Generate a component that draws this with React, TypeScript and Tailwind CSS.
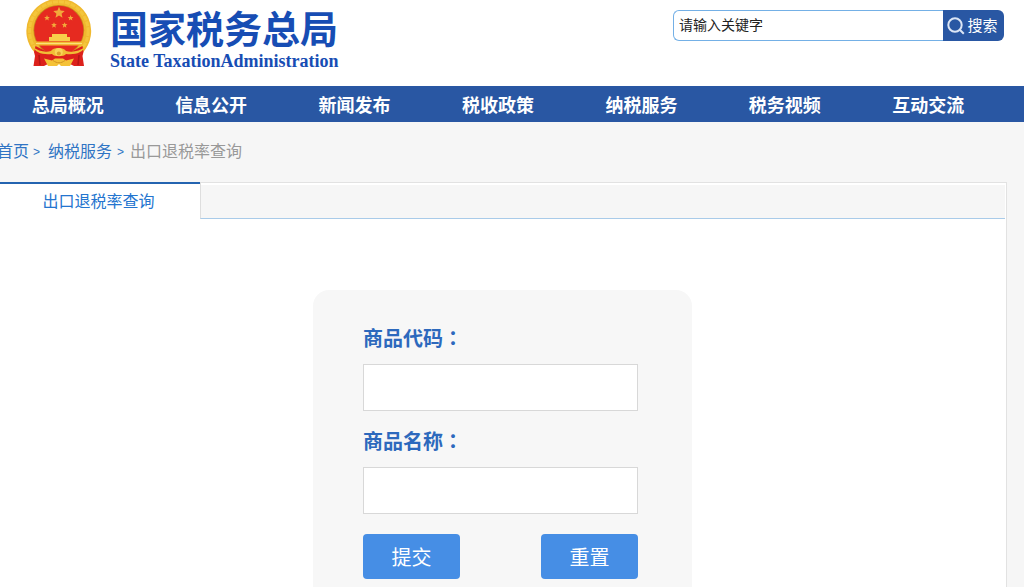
const navItems = ['总局概况', '信息公开', '新闻发布', '税收政策', '纳税服务', '税务视频', '互动交流'];

function star(cx: number, cy: number, r: number) {
  return Array.from({ length: 10 }, (_, i) => {
    const radius = i % 2 === 0 ? r : r * 0.45;
    const angle = (Math.PI / 5) * i - Math.PI / 2;
    return `${cx + radius * Math.cos(angle)},${cy + radius * Math.sin(angle)}`;
  }).join(' ');
}

function Emblem() {
  return (
    <svg viewBox="6 0 66 68" className="h-[68px] w-[66px] shrink-0" aria-hidden="true">
      <path d="M38.800 -1.300a32.300 32.300 0 0 1 24 54L50 60H28L15 53a32.300 32.300 0 0 1 23.800 -54.300z" fill="#f0b92f" />
      <circle cx="38.8" cy="31" r="29.3" fill="none" stroke="#f4c63c" strokeWidth="3" strokeDasharray="5 1" />
      <circle cx="38.8" cy="30.3" r="25.4" fill="#c98a1c" />
      <circle cx="38.8" cy="30.3" r="24.6" fill="#e62a20" />
      <g fill="#f2a93a">
        <polygon points={star(39, 12.8, 6)} />
        <polygon points={star(27, 18, 3)} />
        <polygon points={star(50.6, 18, 3)} />
        <polygon points={star(34, 25.2, 3)} />
        <polygon points={star(44.6, 25.2, 3)} />
      </g>
      <path d="M32 34h15v3h3v4H29v-4h3z" fill="#f8cf4a" />
      <path d="M16 41.500h46l-1.500 4h-43z" fill="#f3bb34" />
      <path d="M16 43.500h46" stroke="#fbe07a" strokeWidth="1" />
      <path d="M15.500 46l10 5h27l10-5 1 6-1 4 1.500 10H54l-4-2H28l-4 2H13.500L15 56l-1-4z" fill="#dc211c" />
      <path d="M19 55l1 10M59 55l-1 10" stroke="#b51717" strokeWidth="1.500" />
      <path d="M12 46.500c7 5 13 6 19 4.500 2-4 13-4 15 0 6 1.500 13 .5 20-4.500-4 6-10 8.500-20 7.500-2 3-12 3-14 0-10 1-16-1.500-20-7.500z" fill="#f1bd36" />
      <circle cx="38.800" cy="52" r="4" fill="#f9d458" />
      <circle cx="38.800" cy="53.500" r="2" fill="#df9c2b" />
      <path d="M24 58.500l8 2 3-2h8l3 2 8-2-4 7.500h-9l-2-2-2 2h-9z" fill="#f5c238" />
      <path d="M33 60.500c4 3 8 3 12 0" stroke="#d49523" strokeWidth="1" fill="none" />
    </svg>
  );
}

function Field({ id, label }: { id: string; label: string }) {
  return (
    <div>
      <label htmlFor={id} className="block text-[20px] leading-7 font-bold text-[#2d69bd]">
        {label}
        <span className="font-['Noto_Sans_CJK_TC',sans-serif]">：</span>
      </label>
      <input
        id={id}
        type="text"
        className="mt-3 block h-[47px] w-full border border-[#d8d8d8] bg-white px-3 text-base outline-none"
      />
    </div>
  );
}

export default function App() {
  return (
    <div className="flex min-h-screen flex-col overflow-x-hidden bg-[#f6f6f6] font-['Noto_Sans_CJK_SC',sans-serif]">
      <header className="flex h-[86px] items-start justify-between bg-white pr-5 pl-[26px]">
        <a href="#" className="flex items-start text-[#174db4]">
          <Emblem />
          <span className="ml-[18px] flex flex-col pt-[7px]">
            <span className="text-[38px] leading-10 font-bold">国家税务总局</span>
            <span className="mt-1 font-['Liberation_Serif',serif] text-[18px] leading-5 font-bold">
              State TaxationAdministration
            </span>
          </span>
        </a>
        <form className="mt-[10px] flex h-[31px]" onSubmit={(e) => e.preventDefault()}>
          <input
            type="text"
            aria-label="请输入关键字"
            placeholder="请输入关键字"
            className="w-[270px] rounded-l-md border border-r-0 border-[#74b0e6] bg-white px-[5px] pb-[2px] text-[14px] text-black outline-none placeholder:text-[#222222]"
          />
          <button type="submit" className="flex w-[61px] items-center justify-center gap-[2px] rounded-r-md bg-[#2957a3] pr-[2px] text-[15px] text-white">
            <svg viewBox="0 0 18 18" className="h-[18px] w-[18px]" fill="none" stroke="#dce6f5" strokeWidth="2" aria-hidden="true">
              <circle cx="8" cy="8" r="6.700" />
              <path d="M12.800 12.800l4 4" />
            </svg>
            搜索
          </button>
        </form>
      </header>

      <nav className="h-9 bg-[#2957a3] pr-6">
        <ul className="-ml-1 flex h-full items-center">
          {navItems.map((item) => (
            <li key={item} className="flex-1 text-center">
              <a href="#" className="text-[18px] leading-9 font-bold text-white">
                {item}
              </a>
            </li>
          ))}
        </ul>
      </nav>

      <div className="-ml-[3px] flex h-[60px] items-center pb-1 text-[16px] text-[#2f74c4]">
        <a href="#">首页</a>
        <span className="ml-1 pt-1 font-['Liberation_Sans',sans-serif] text-[12px]">&gt;</span>
        <a href="#" className="ml-2">纳税服务</a>
        <span className="ml-[5px] pt-1 font-['Liberation_Sans',sans-serif] text-[12px]">&gt;</span>
        <span className="ml-[6px] text-[#999999]">出口退税率查询</span>
      </div>

      <main className="mr-[17px] flex flex-1 flex-col border-t border-r border-[#e2e2e2] bg-white pr-px">
        <div className="-mt-px flex h-[37px]">
          <button type="button" className="w-[200px] border-t-2 border-[#2464b0] bg-white pr-[3px] pb-[3px] text-[16px] text-[#2475cf]">
            出口退税率查询
          </button>
          <div className="mt-px flex-1 border-b border-l border-b-[#a9cbe9] border-l-[#dedede] bg-white pt-[2px]">
            <div className="h-full bg-[#f6f6f6]" />
          </div>
        </div>

        <form
          className="mx-auto mt-[71px] flex w-[379px] flex-1 flex-col gap-4 rounded-t-2xl bg-[#f7f7f7] pt-[34px] pr-[54px] pb-[9px] pl-[50px]"
          onSubmit={(e) => e.preventDefault()}
        >
          <Field id="code" label="商品代码" />
          <Field id="name" label="商品名称" />
          <div className="mt-1 flex justify-between">
            <button type="submit" className="h-[45px] w-[97px] rounded bg-[#468ee5] text-[20px] text-white">
              提交
            </button>
            <button type="reset" className="h-[45px] w-[97px] rounded bg-[#468ee5] text-[20px] text-white">
              重置
            </button>
          </div>
        </form>
      </main>
    </div>
  );
}
